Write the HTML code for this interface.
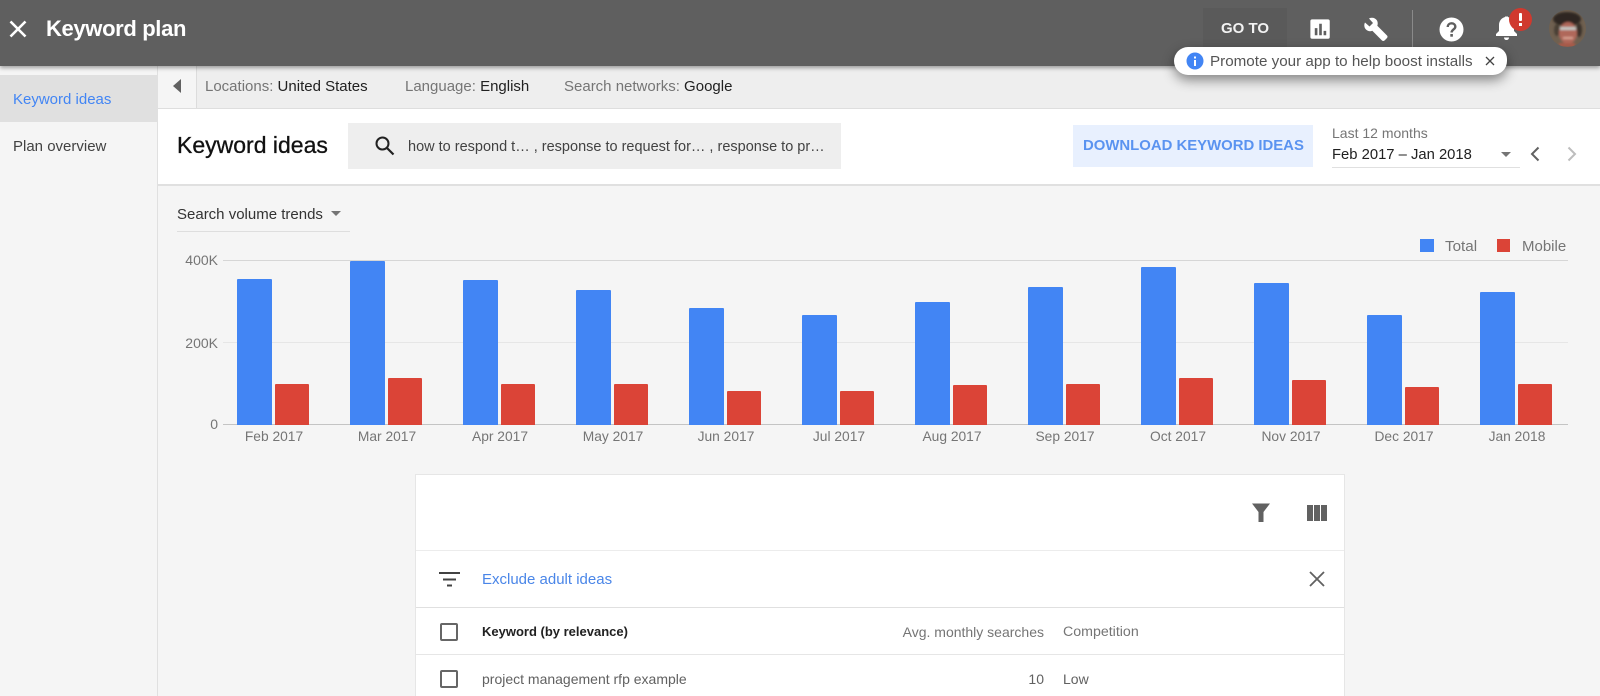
<!DOCTYPE html>
<html><head><meta charset="utf-8"><style>
*{box-sizing:border-box}
html,body{margin:0;padding:0;width:1600px;height:696px;overflow:hidden}
#w{width:1600px;height:696px;overflow:hidden;background:#f5f5f5;position:relative;font-family:"Liberation Sans",sans-serif;color:#212121}
.a{position:absolute}
.t{position:absolute;white-space:nowrap;line-height:20px;height:20px}
.b{position:absolute;background:#4285f4;width:35px;border-radius:1px 1px 0 0}
.r{position:absolute;background:#db4437;width:34px;border-radius:1px 1px 0 0}
.l{position:absolute;top:427px;width:100px;text-align:center;font-size:13.800px;line-height:20px;color:#757575}
.g{color:#757575}
svg{position:absolute;display:block}
</style></head><body><div id="w">
<div class="a" style="left:157px;top:66px;width:1443px;height:42px;background:#eeeeee"></div>
<div class="a" style="left:157px;top:66px;width:1px;height:630px;background:#e0e0e0"></div>
<div class="a" style="left:0;top:75px;width:157px;height:47px;background:#e0e0e0"></div>
<div class="t" style="left:13px;top:90px;font-size:15px;color:#4285f4">Keyword ideas</div>
<div class="t" style="left:13px;top:137px;font-size:15px;color:#424242">Plan overview</div>

<div class="a" style="left:158px;top:66px;width:39px;height:42px;background:#f5f5f5;border-right:1px solid #dcdcdc"></div>
<svg style="left:172px;top:78px" width="10" height="16"><path d="M9 1V15L1 8Z" fill="#616161"/></svg>
<div class="t" style="left:205px;top:77px;font-size:15px"><span class="g">Locations:</span> United States</div>
<div class="t" style="left:405px;top:77px;font-size:15px"><span class="g">Language:</span> English</div>
<div class="t" style="left:564px;top:77px;font-size:15px"><span class="g">Search networks:</span> Google</div>

<div class="a" style="left:158px;top:108px;width:1442px;height:78px;background:#fff;border-top:1px solid #dedede;border-bottom:2px solid #e0e0e0"></div>
<div class="t" style="left:177px;top:133px;font-size:23px;line-height:24px;height:24px;color:#111;-webkit-text-stroke:.3px #111">Keyword ideas</div>
<div class="a" style="left:348px;top:123px;width:493px;height:46px;background:#eeeeee"></div>
<svg style="left:372px;top:133px" width="24" height="24" viewBox="0 0 24 24"><circle cx="10.500" cy="10.500" r="6" fill="none" stroke="#212121" stroke-width="2"/><path d="M15 15L21.500 21.500" stroke="#212121" stroke-width="2.200"/></svg>
<div class="t" style="left:408px;top:137px;font-size:14.500px;color:#424242">how to respond t… , response to request for… , response to pr…</div>
<div class="a" style="left:1073px;top:125px;width:240px;height:42px;background:#e8f0fe"></div>
<div class="t" style="left:1083px;top:136px;font-size:14.900px;font-weight:bold;color:#5a93f0">DOWNLOAD KEYWORD IDEAS</div>
<div class="t" style="left:1332px;top:123px;font-size:14px;color:#757575">Last 12 months</div>
<div class="t" style="left:1332px;top:145px;font-size:14.800px;color:#212121">Feb 2017 – Jan 2018</div>
<div class="a" style="left:1332px;top:167px;width:188px;height:1px;background:#e0e0e0"></div>
<svg style="left:1500px;top:151px" width="12" height="7"><path d="M1 1H11L6 6Z" fill="#757575"/></svg>
<svg style="left:1529px;top:145px" width="12" height="18"><path d="M9.500 2.500L3 9L9.500 15.500" fill="none" stroke="#616161" stroke-width="2"/></svg>
<svg style="left:1566px;top:145px" width="12" height="18"><path d="M2.500 2.500L9 9L2.500 15.500" fill="none" stroke="#bdbdbd" stroke-width="2"/></svg>

<div class="t" style="left:177px;top:205px;font-size:15px;color:#333">Search volume trends</div>
<svg style="left:330px;top:210px" width="12" height="7"><path d="M1 1H11L6 6Z" fill="#757575"/></svg>
<div class="a" style="left:177px;top:231px;width:173px;height:1px;background:#dedede"></div>

<div class="a" style="left:1420px;top:239px;width:14px;height:13px;background:#4285f4"></div>
<div class="t" style="left:1445px;top:237px;font-size:15.200px;color:#757575">Total</div>
<div class="a" style="left:1497px;top:239px;width:13px;height:13px;background:#db4437"></div>
<div class="t" style="left:1522px;top:237px;font-size:15px;color:#757575">Mobile</div>

<div class="a" style="left:223px;top:260px;width:1345px;height:1px;background:#d6d6d6"></div>
<div class="a" style="left:223px;top:342px;width:1345px;height:1px;background:#e6e6e6"></div>
<div class="a" style="left:223px;top:424px;width:1345px;height:1px;background:#c4c4c4"></div>
<div class="t" style="right:1382px;top:250px;font-size:14px;color:#757575">400K</div>
<div class="t" style="right:1382px;top:333px;font-size:14px;color:#757575">200K</div>
<div class="t" style="right:1382px;top:414px;font-size:14px;color:#757575">0</div>

<div class="b" style="left:237px;top:279px;height:146px"></div><div class="r" style="left:275px;top:384px;height:41px"></div>
<div class="b" style="left:350px;top:261px;height:164px"></div><div class="r" style="left:388px;top:378px;height:47px"></div>
<div class="b" style="left:463px;top:280px;height:145px"></div><div class="r" style="left:501px;top:384px;height:41px"></div>
<div class="b" style="left:576px;top:290px;height:135px"></div><div class="r" style="left:614px;top:384px;height:41px"></div>
<div class="b" style="left:689px;top:308px;height:117px"></div><div class="r" style="left:727px;top:391px;height:34px"></div>
<div class="b" style="left:802px;top:315px;height:110px"></div><div class="r" style="left:840px;top:391px;height:34px"></div>
<div class="b" style="left:915px;top:302px;height:123px"></div><div class="r" style="left:953px;top:385px;height:40px"></div>
<div class="b" style="left:1028px;top:287px;height:138px"></div><div class="r" style="left:1066px;top:384px;height:41px"></div>
<div class="b" style="left:1141px;top:267px;height:158px"></div><div class="r" style="left:1179px;top:378px;height:47px"></div>
<div class="b" style="left:1254px;top:283px;height:142px"></div><div class="r" style="left:1292px;top:380px;height:45px"></div>
<div class="b" style="left:1367px;top:315px;height:110px"></div><div class="r" style="left:1405px;top:387px;height:38px"></div>
<div class="b" style="left:1480px;top:292px;height:133px"></div><div class="r" style="left:1518px;top:384px;height:41px"></div>

<div class="l" style="left:224px">Feb 2017</div><div class="l" style="left:337px">Mar 2017</div><div class="l" style="left:450px">Apr 2017</div><div class="l" style="left:563px">May 2017</div><div class="l" style="left:676px">Jun 2017</div><div class="l" style="left:789px">Jul 2017</div><div class="l" style="left:902px">Aug 2017</div><div class="l" style="left:1015px">Sep 2017</div><div class="l" style="left:1128px">Oct 2017</div><div class="l" style="left:1241px">Nov 2017</div><div class="l" style="left:1354px">Dec 2017</div><div class="l" style="left:1467px">Jan 2018</div>

<div class="a" style="left:415px;top:474px;width:930px;height:230px;background:#fff;border:1px solid #e6e6e6"></div>
<div class="a" style="left:416px;top:550px;width:928px;height:1px;background:#ececec"></div>
<div class="a" style="left:416px;top:607px;width:928px;height:1px;background:#e0e0e0"></div>
<div class="a" style="left:416px;top:654px;width:928px;height:1px;background:#e6e6e6"></div>
<svg style="left:1251px;top:503px" width="20" height="20"><path d="M1 0.500H19L12.500 9V19H7.500V9Z" fill="#616161"/></svg>
<svg style="left:1307px;top:505px" width="20" height="16"><path d="M0 0H6V16H0ZM7 0H13V16H7ZM14 0H20V16H14Z" fill="#616161"/></svg>
<svg style="left:439px;top:572px" width="21" height="15"><path d="M0 1H21M4 7.500H17M8 13.500H13" stroke="#424242" stroke-width="2"/></svg>
<div class="t" style="left:482px;top:570px;font-size:15px;color:#4a86e8">Exclude adult ideas</div>
<svg style="left:1308px;top:570px" width="18" height="18"><path d="M2 2L16 16M16 2L2 16" stroke="#616161" stroke-width="1.800"/></svg>
<div class="a" style="left:440px;top:623px;width:18px;height:18px;border:2px solid #666;border-radius:2px"></div>
<div class="a" style="left:440px;top:670px;width:18px;height:18px;border:2px solid #666;border-radius:2px"></div>
<div class="t" style="left:482px;top:622px;font-size:13px;font-weight:bold;color:#212121">Keyword (by relevance)</div>
<div class="t" style="right:556px;top:622px;font-size:14px;color:#757575">Avg. monthly searches</div>
<div class="t" style="left:1063px;top:622px;font-size:14.200px;color:#757575">Competition</div>
<div class="t" style="left:482px;top:669px;font-size:14px;color:#616161">project management rfp example</div>
<div class="t" style="right:556px;top:669px;font-size:14px;color:#616161">10</div>
<div class="t" style="left:1063px;top:669px;font-size:14px;color:#616161">Low</div>

<div class="a" style="left:0;top:0;width:1600px;height:66px;background:#5f5f5f;box-shadow:0 2px 4px rgba(0,0,0,.35)"></div>
<svg style="left:8px;top:20px" width="20" height="18"><path d="M2.500 1.500L17.500 16.500M17.500 1.500L2.500 16.500" stroke="#fff" stroke-width="2.600"/></svg>
<div class="t" style="left:46px;top:17px;font-size:22px;line-height:24px;height:24px;font-weight:bold;color:#fff;letter-spacing:-.35px">Keyword plan</div>
<div class="a" style="left:1203px;top:8px;width:84px;height:40px;background:#5a5a5a"></div>
<div class="t" style="left:1221px;top:19px;font-size:15px;font-weight:bold;color:#f2f2f2">GO TO</div>
<svg style="left:1308px;top:17px" width="24" height="24"><path fill-rule="evenodd" d="M3 1H21Q23 1 23 3V21Q23 23 21 23H3Q1 23 1 21V3Q1 1 3 1ZM6 11V19H9V11ZM11 6V19H14V6ZM16 14V19H19V14Z" fill="#fff" transform="translate(1.500,1.500) scale(.88)"/></svg>
<svg style="left:1362px;top:16px" width="26" height="26" viewBox="0 0 26 26"><path d="M3 6.500L7.500 10.500L11 7L7 2.500C10 1 13.500 2 15 4.500C16 6.500 15.800 8.500 15.300 9.800L25 19.500C25.700 20.200 25.700 21.300 25 22L22.500 24.500C21.800 25.200 20.700 25.200 20 24.500L10.300 14.800C8 15.700 5.700 15.200 4 13.500C2.200 11.700 1.800 8.800 3 6.500Z" fill="#fff"/></svg>
<div class="a" style="left:1412px;top:10px;width:1px;height:37px;background:#8a8a8a"></div>
<svg style="left:1439px;top:17px" width="25" height="25"><circle cx="12.500" cy="12.500" r="12" fill="#fff"/><path d="M8.700 10C8.700 7.800 10.400 6.300 12.500 6.300C14.600 6.300 16.300 7.700 16.300 9.700C16.300 12.400 12.600 12.600 12.600 15.500" fill="none" stroke="#5f5f5f" stroke-width="2.400"/><rect x="11.300" y="17" width="2.600" height="2.700" fill="#5f5f5f"/></svg>
<svg style="left:1495px;top:15px" width="24" height="27"><path d="M1 21V19L4 16V10C4 6 6.500 3 10 2V1.500H13V2C16.500 3 19 6 19 10V16L22 19V21ZM9 22.500H14C14 24 13 25 11.500 25C10 25 9 24 9 22.500Z" fill="#fff"/></svg>
<div class="a" style="left:1509px;top:8px;width:23px;height:23px;border-radius:50%;background:#d0392e"></div>
<div class="a" style="left:1519px;top:13px;width:3px;height:8px;background:#fff;border-radius:1px"></div>
<div class="a" style="left:1519px;top:23px;width:3px;height:3px;background:#fff"></div>
<svg style="left:1549px;top:10px" width="37" height="37"><defs><clipPath id="c"><circle cx="18.500" cy="18.500" r="18.500"/></clipPath><filter id="s"><feGaussianBlur stdDeviation="1"/></filter></defs><g clip-path="url(#c)"><rect width="37" height="37" fill="#6f6050"/><g filter="url(#s)"><ellipse cx="18" cy="9" rx="14" ry="7" fill="#2e2824"/><ellipse cx="8" cy="20" rx="3" ry="6" fill="#4a4036"/><ellipse cx="30" cy="20" rx="3" ry="7" fill="#3a322a"/><ellipse cx="19" cy="23" rx="9" ry="11" fill="#b0685a"/><rect x="11" y="17" width="16" height="3" fill="#c4c8c4"/><rect x="14" y="27" width="10" height="2" fill="#dba595"/><rect x="10" y="33" width="16" height="4" fill="#a85a48"/></g></g></svg>

<div class="a" style="left:1174px;top:47px;width:333px;height:28px;border-radius:14px 12px 14px 14px;background:#fff;box-shadow:0 5px 12px rgba(0,0,0,.45)"></div>
<svg style="left:1186px;top:52px" width="18" height="18"><circle cx="9" cy="9" r="8.500" fill="#4285f4"/><rect x="8" y="8" width="2" height="6" fill="#fff"/><rect x="8" y="4.500" width="2" height="2" fill="#fff"/></svg>
<div class="t" style="left:1210px;top:52px;font-size:15.200px;color:#555">Promote your app to help boost installs</div>
<svg style="left:1485px;top:56px" width="10" height="10"><path d="M1 1L9 9M9 1L1 9" stroke="#444" stroke-width="1.300"/></svg>
</div></body></html>
